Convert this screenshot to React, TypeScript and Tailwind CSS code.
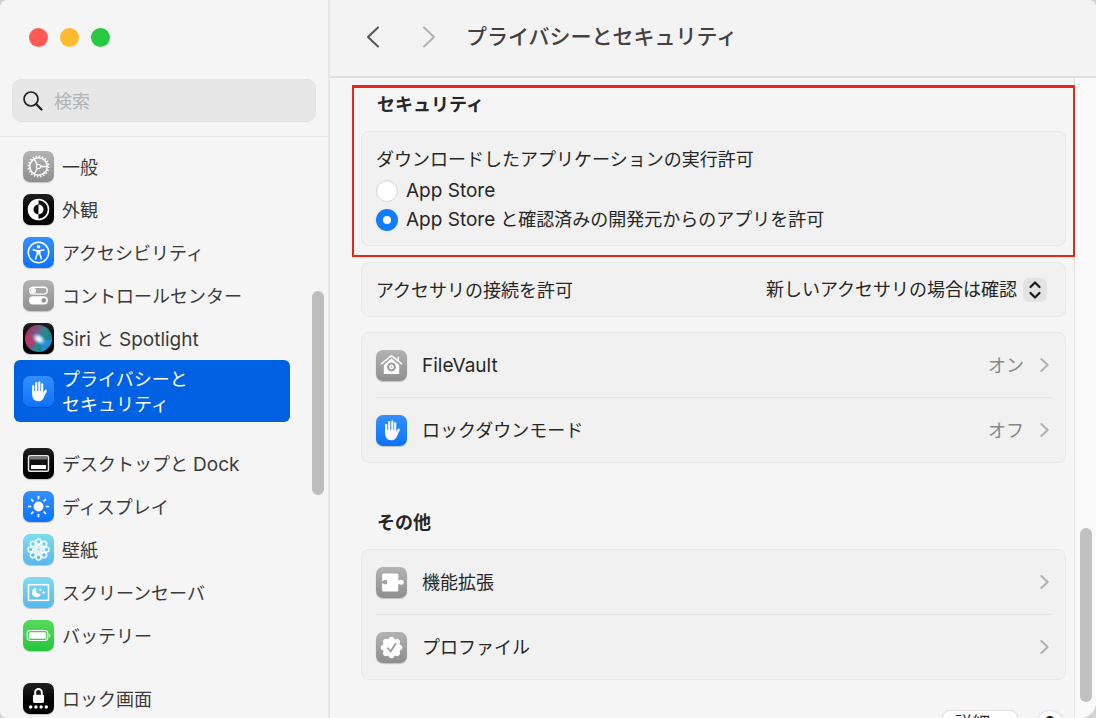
import { useState } from 'react'
import type { ReactNode } from 'react'
import clsx from 'clsx'

const OCTANTS = [0, 45, 90, 135, 180, 225, 270, 315]

function GearGlyph() {
  return (
    <g fill="none" stroke="#fff">
      <circle cx="15.5" cy="15.5" r="10.2" strokeWidth="1.6" strokeDasharray="1.5 1.704" />
      <circle cx="15.5" cy="15.5" r="8.7" strokeWidth="1.6" />
      <circle cx="15.5" cy="15.5" r="2.1" strokeWidth="1.2" />
      <path d="M17.7 15.5h6.4M14.4 13.6 11.2 8M14.4 17.4 11.2 23" strokeWidth="1.4" />
    </g>
  )
}

function AppearanceGlyph() {
  return (
    <g>
      <circle cx="15.5" cy="15.5" r="10" fill="none" stroke="#fff" strokeWidth="1.6" />
      <path d="M15.5 5.5a10 10 0 0 0 0 20v-5a5 5 0 0 1 0-10z" fill="#fff" />
      <path d="M15.5 10.5a5 5 0 0 1 0 10z" fill="#fff" />
    </g>
  )
}

function AccessibilityGlyph() {
  return (
    <g>
      <circle cx="15.5" cy="15.5" r="10.2" fill="none" stroke="#fff" strokeWidth="1.6" />
      <circle cx="15.5" cy="9.8" r="1.7" fill="#fff" />
      <path
        d="M10.2 12.8 14.2 13.7v3.2L12.6 22M20.8 12.8 16.8 13.7v3.2L18.4 22"
        fill="none"
        stroke="#fff"
        strokeWidth="1.5"
        strokeLinecap="round"
        strokeLinejoin="round"
      />
      <path d="M14 13h3v4.6h-3z" fill="#fff" />
    </g>
  )
}

function SwitchesGlyph() {
  return (
    <g>
      <rect x="6.8" y="7.3" width="17.4" height="6.8" rx="3.4" fill="none" stroke="#fff" strokeWidth="1.4" />
      <circle cx="10.4" cy="10.7" r="2.6" fill="#fff" />
      <rect x="6.1" y="16.3" width="18.8" height="8.2" rx="4.1" fill="#fff" />
      <circle cx="20.8" cy="20.4" r="2.4" fill="#959595" />
    </g>
  )
}

function SiriGlyph() {
  return (
    <g>
      <defs>
        <linearGradient id="siri-orb" x1="0" y1="0.2" x2="1" y2="0.8">
          <stop offset="0" stopColor="#b8285c" />
          <stop offset="0.4" stopColor="#63658f" />
          <stop offset="0.6" stopColor="#218d8b" />
          <stop offset="1" stopColor="#186db5" />
        </linearGradient>
        <radialGradient id="siri-glow">
          <stop offset="0" stopColor="#fff" />
          <stop offset="0.4" stopColor="#d7ecff" stopOpacity="0.85" />
          <stop offset="1" stopColor="#7fb9ff" stopOpacity="0" />
        </radialGradient>
      </defs>
      <circle cx="15.5" cy="15.5" r="13.6" fill="url(#siri-orb)" />
      <path d="M3 13C8 10 12 12 16 16c-4 3-8 9-7 11-4-3-7-8-6-14z" fill="#d52c5b" opacity="0.6" />
      <path d="M16 16c3 1 8 1 13 1-1 6-6 11-11 12 1-4 0-9-2-13z" fill="#2e9cff" opacity="0.5" />
      <ellipse cx="15.8" cy="16" rx="8" ry="5.5" fill="url(#siri-glow)" transform="rotate(35 15.8 16)" />
    </g>
  )
}

function HandGlyph() {
  return (
    <g fill="none" stroke="#fff" strokeLinecap="round">
      <path d="M10.2 10v7M13.2 7v9M16.3 6.5v9M19.2 8.3v8" strokeWidth="2.1" />
      <path d="M22.7 14.7 20.6 19" strokeWidth="2.3" />
      <path
        d="M9.2 15h11v2.5l1.8.9c-1 3.5-2.6 6.8-6.6 6.8-4 0-6.2-2.6-6.2-6.7z"
        fill="#fff"
        stroke="none"
      />
    </g>
  )
}

function DockGlyph() {
  return (
    <g>
      <rect x="5.5" y="7.7" width="20" height="15.6" rx="1.5" fill="#111" stroke="#e8e8e8" strokeWidth="1.5" />
      <path d="M6.5 9h18v2.5h-18z" fill="#777" />
      <rect x="8" y="17" width="15" height="4" rx="0.5" fill="#fff" />
    </g>
  )
}

function SunGlyph() {
  return (
    <g>
      <circle cx="15.5" cy="15.5" r="4.9" fill="#fff" />
      {OCTANTS.map((angle) => (
        <path
          key={angle}
          d="M15.5 5.6v1.9"
          stroke="#fff"
          strokeWidth="1.7"
          strokeLinecap="round"
          transform={`rotate(${angle} 15.5 15.5)`}
        />
      ))}
    </g>
  )
}

function FlowerGlyph() {
  return (
    <g fill="none" stroke="#fff">
      {OCTANTS.map((angle) => (
        <g key={angle} transform={`rotate(${angle} 15.5 15.5)`}>
          <circle cx="15.5" cy="7.7" r="2.6" strokeWidth="1.5" />
          <path d="M15.5 10.4v4" strokeWidth="1.4" />
        </g>
      ))}
      <circle cx="15.5" cy="15.5" r="3.8" strokeWidth="1.3" />
    </g>
  )
}

function ScreenSaverGlyph() {
  return (
    <g>
      <rect x="5.5" y="7.7" width="20" height="15.6" fill="none" stroke="#fff" strokeWidth="1.5" />
      <path d="M13.3 11a4.6 4.6 0 1 0 4.6 6.2 4.5 4.5 0 0 1-4.6-6.2z" fill="#fff" />
      <path
        d="M17.2 11.2l.5 1.2 1.2.5-1.2.5-.5 1.2-.5-1.2-1.2-.5 1.2-.5zM20.5 13.6l.6 1.4 1.4.6-1.4.6-.6 1.4-.6-1.4-1.4-.6 1.4-.6z"
        fill="#fff"
      />
    </g>
  )
}

function BatteryGlyph() {
  return (
    <g>
      <rect x="4.2" y="10.5" width="20.6" height="10" rx="3" fill="none" stroke="#fff" strokeWidth="1.2" />
      <rect x="5.9" y="12.2" width="17.2" height="6.6" rx="1.5" fill="#fff" />
      <path d="M26 13.8c1.8.6 1.8 2.8 0 3.4z" fill="#fff" />
    </g>
  )
}

function LockGlyph() {
  return (
    <g fill="#fff">
      <path d="M12.2 12.5V9.3a3.3 3.3 0 0 1 6.6 0v3.2" fill="none" stroke="#fff" strokeWidth="1.9" />
      <rect x="10" y="11.7" width="11" height="8.3" rx="1.4" />
      <circle cx="7.7" cy="24" r="1.7" />
      <circle cx="12.9" cy="24" r="1.7" />
      <circle cx="18.1" cy="24" r="1.7" />
      <circle cx="23.3" cy="24" r="1.7" />
    </g>
  )
}

function VaultGlyph() {
  return (
    <g>
      <path
        d="M5.3 13.8 15.5 5.7l10.2 8.1M22.3 7.3v3"
        fill="none"
        stroke="#fff"
        strokeWidth="1.5"
        strokeLinecap="round"
        strokeLinejoin="round"
      />
      <path d="M15.5 8.6 23.2 15V24H7.8v-9z" fill="#fff" />
      <circle cx="15.5" cy="17" r="3.4" fill="none" stroke="#999" strokeWidth="2" />
      <circle cx="15.5" cy="17" r="0.8" fill="#999" />
    </g>
  )
}

function PuzzleGlyph() {
  return (
    <path
      d="M7.6 6.5h13.2a1.5 1.5 0 0 1 1.5 1.5v5.6c1.1 0 1.5-.9 2.9-.9a2.5 2.5 0 0 1 0 5c-1.4 0-1.8-.9-2.9-.9V23a1.5 1.5 0 0 1-1.5 1.5H7.6A1.5 1.5 0 0 1 6.100 23v-7c.9 0 1.500 1.400 3 1.400a2.300 2.300 0 0 0 0-4.600c-1.500 0-2.100 1.400-3 1.400V8a1.500 1.500 0 0 1 1.500-1.500z"
      fill="#fff"
    />
  )
}

function SealGlyph() {
  return (
    <g>
      <g fill="#fff">
        <circle cx="15.5" cy="15.5" r="9" />
        {OCTANTS.map((angle) => (
          <circle key={angle} cx="15.5" cy="7.5" r="2.8" transform={`rotate(${angle} 15.5 15.5)`} />
        ))}
      </g>
      <path
        d="M11.8 16.2l2.800 3.300 5-7.800"
        fill="none"
        stroke="#999"
        strokeWidth="1.7"
        strokeLinecap="round"
        strokeLinejoin="round"
      />
    </g>
  )
}

const TILES = {
  gray: 'bg-linear-to-b from-[#b3b3b3] to-[#8e8e8e]',
  black: 'bg-linear-to-b from-[#202020] to-black',
  blue: 'bg-linear-to-b from-[#338fff] to-[#0a72f8]',
  sky: 'bg-linear-to-b from-[#7fdcf0] to-[#55b8ec]',
  green: 'bg-linear-to-b from-[#55dc5c] to-[#22c63c]',
}

type Tile = keyof typeof TILES

function IconTile({ tile, children }: { tile: Tile; children: ReactNode }) {
  return (
    <span className={clsx('block size-[31px] shrink-0 rounded-[7px] shadow-[0_1px_1px_rgba(0,0,0,0.2)]', TILES[tile])}>
      <svg viewBox="0 0 31 31" className="size-full" aria-hidden="true">
        {children}
      </svg>
    </span>
  )
}

// Latin text is set one pixel larger so it balances with the kana
function Latin({ children }: { children: ReactNode }) {
  return <span className="text-[19px]">{children}</span>
}

interface NavItem {
  label: ReactNode
  tile: Tile
  glyph: ReactNode
  active?: boolean
}

const NAV_GROUPS: NavItem[][] = [
  [
    { label: '一般', tile: 'gray', glyph: <GearGlyph /> },
    { label: '外観', tile: 'black', glyph: <AppearanceGlyph /> },
    { label: 'アクセシビリティ', tile: 'blue', glyph: <AccessibilityGlyph /> },
    { label: 'コントロールセンター', tile: 'gray', glyph: <SwitchesGlyph /> },
    { label: <><Latin>Siri</Latin> と <Latin>Spotlight</Latin></>, tile: 'black', glyph: <SiriGlyph /> },
    { label: <>プライバシーと<br />セキュリティ</>, tile: 'blue', glyph: <HandGlyph />, active: true },
  ],
  [
    { label: <>デスクトップと <Latin>Dock</Latin></>, tile: 'black', glyph: <DockGlyph /> },
    { label: 'ディスプレイ', tile: 'blue', glyph: <SunGlyph /> },
    { label: '壁紙', tile: 'sky', glyph: <FlowerGlyph /> },
    { label: 'スクリーンセーバ', tile: 'sky', glyph: <ScreenSaverGlyph /> },
    { label: 'バッテリー', tile: 'green', glyph: <BatteryGlyph /> },
  ],
  [{ label: 'ロック画面', tile: 'black', glyph: <LockGlyph /> }],
]

function Chevron({ className, flip = false }: { className: string; flip?: boolean }) {
  return (
    <svg
      viewBox="0 0 14 22"
      className={className}
      fill="none"
      stroke="currentColor"
      strokeWidth="2"
      strokeLinecap="round"
      strokeLinejoin="round"
      aria-hidden="true"
    >
      <path d={flip ? 'M12 1.5 2 11l10 9.5' : 'M2 1.5 12 11 2 20.5'} />
    </svg>
  )
}

function Sidebar() {
  return (
    <aside className="flex w-[330px] shrink-0 flex-col border-r-2 border-[#e6e6e6] bg-[#f5f5f5]">
      <div className="flex gap-3 px-[29px] pt-7">
        <button aria-label="閉じる" className="size-[19px] rounded-full bg-[#ff5b54]" />
        <button aria-label="しまう" className="size-[19px] rounded-full bg-[#fdbb2d]" />
        <button aria-label="拡大" className="size-[19px] rounded-full bg-[#28c840]" />
      </div>

      <label className="mx-3 mt-8 mb-3.5 flex h-[43px] items-center gap-[11px] rounded-[9px] border border-[#e3e3e3] bg-[#e7e7e7] px-2.5">
        <svg viewBox="0 0 20 20" className="size-5 shrink-0" fill="none" stroke="#1f1f1f" strokeLinecap="round" aria-hidden="true">
          <circle cx="8" cy="8" r="7" strokeWidth="1.7" />
          <path d="M13.3 13.3 18.500 18.500" strokeWidth="2.3" />
        </svg>
        <input
          type="text"
          aria-label="検索"
          placeholder="検索"
          className="min-w-0 flex-1 bg-transparent pt-0.5 outline-none placeholder:text-[#b2b2b2]"
        />
      </label>

      <div className="flex min-h-0 flex-1 overflow-hidden border-t border-[#e6e6e6]">
        <nav className="flex flex-1 flex-col gap-5 pt-2 pl-3.5">
          {NAV_GROUPS.map((group, i) => (
            <ul key={i}>
              {group.map((item, j) => (
                <li key={j}>
                  <a
                    href="#"
                    className={clsx(
                      'flex items-center gap-2 rounded-md px-[9px]',
                      item.active ? 'h-[62px] bg-[#0062e2] leading-[25px] text-white' : 'h-[43px] text-[#3a3a3a]',
                    )}
                  >
                    <IconTile tile={item.tile}>{item.glyph}</IconTile>
                    <span className="pt-0.5">{item.label}</span>
                  </a>
                </li>
              ))}
            </ul>
          ))}
        </nav>
        <div className="w-[38px] shrink-0 pt-[154px] pl-[22px]">
          <div className="h-[204px] w-3 rounded-full bg-[#bdbdbd]" />
        </div>
      </div>
    </aside>
  )
}

const CARD = 'rounded-lg border border-[#e8e8e8] bg-[#f1f1f1]'

interface LinkRow {
  label: ReactNode
  tile: Tile
  glyph: ReactNode
  value?: string
}

function LinkCard({ rows }: { rows: LinkRow[] }) {
  return (
    <ul className={clsx(CARD, 'divide-y divide-[#e4e4e4] px-3.5')}>
      {rows.map((row, i) => (
        <li key={i}>
          <a href="#" className="flex h-16 items-center">
            <IconTile tile={row.tile}>{row.glyph}</IconTile>
            <span className="ml-[15px] flex-1 pt-0.5">{row.label}</span>
            <span className="pt-0.5 text-[#868686]">{row.value}</span>
            <Chevron className="mr-0.5 ml-4 h-3.5 w-[9px] stroke-3 text-[#b0b0b0]" />
          </a>
        </li>
      ))}
    </ul>
  )
}

const RADIO =
  'size-[22px] appearance-none rounded-full border border-[#dadada] bg-white shadow-[inset_0_1px_1px_rgba(0,0,0,0.08)] checked:border-[7px] checked:border-[#117dfc] checked:shadow-none'

function DownloadPolicy() {
  const [source, setSource] = useState('identified')

  return (
    <section className="relative">
      <h2 className="px-4 font-bold">セキュリティ</h2>
      <fieldset className={clsx(CARD, 'mt-3.5 flex flex-col px-3.5 pt-3.5 pb-[11px]')}>
        <legend className="float-left h-[30px] leading-7">ダウンロードしたアプリケーションの実行許可</legend>
        <label className="flex h-[29px] items-center gap-2">
          <input type="radio" name="source" className={RADIO} checked={source === 'store'} onChange={() => setSource('store')} />
          <Latin>App Store</Latin>
        </label>
        <label className="flex h-[29px] items-center gap-2">
          <input type="radio" name="source" className={RADIO} checked={source === 'identified'} onChange={() => setSource('identified')} />
          <span>
            <Latin>App Store</Latin> と確認済みの開発元からのアプリを許可
          </span>
        </label>
      </fieldset>
      {/* Highlight frame drawn over the section */}
      <div className="pointer-events-none absolute -inset-x-[9px] -top-2 -bottom-[11px] border-2 border-t-3 border-[#e8251a]" />
    </section>
  )
}

function AccessoryRow() {
  return (
    <div className={clsx(CARD, 'flex h-[55px] items-center justify-between pr-[18px] pl-3.5')}>
      <label htmlFor="accessories" className="pt-0.5">
        アクセサリの接続を許可
      </label>
      <div className="relative">
        <select id="accessories" className="block h-6 appearance-none bg-transparent pr-[29px] outline-none">
          <option>新しいアクセサリの場合は確認</option>
        </select>
        <span className="pointer-events-none absolute top-0 right-0 flex size-6 items-center justify-center rounded-md bg-[#e3e3e3]">
          <svg
            viewBox="0 0 12 18"
            className="h-[18px] w-3"
            fill="none"
            stroke="#1c1c1c"
            strokeWidth="2.2"
            strokeLinecap="round"
            strokeLinejoin="round"
            aria-hidden="true"
          >
            <path d="M1.5 6 6 1.5 10.5 6M1.5 12 6 16.5 10.5 12" />
          </svg>
        </span>
      </div>
    </div>
  )
}

export default function App() {
  return (
    <div className="h-screen bg-[#d4d4d4]">
      <div
        lang="ja"
        className="flex h-full overflow-hidden rounded-lg rounded-br-2xl bg-[#f5f5f5] font-['Inter','Noto_Sans_CJK_JP',sans-serif] text-[18px] leading-6 text-[#262626]"
      >
        <Sidebar />

        <main className="flex min-w-0 flex-1 flex-col">
          <header className="flex h-[78px] shrink-0 items-center border-b-2 border-[#dfdfdf] bg-[#f3f3f3] pb-0.5 pl-9">
            <button aria-label="戻る" className="text-[#555555]">
              <Chevron flip className="h-[22px] w-3.5" />
            </button>
            <button aria-label="進む" className="ml-[42px] text-[#b2b2b2]">
              <Chevron className="h-[22px] w-3.5" />
            </button>
            <h1 className="ml-[30px] text-[21px] font-medium text-[#414141]">プライバシーとセキュリティ</h1>
          </header>

          <div className="flex min-h-0 flex-1 overflow-hidden">
            <div className="flex min-w-0 flex-1 flex-col border-r border-[#e2e2e2] pt-[15px] pr-2 pl-[31px]">
              <DownloadPolicy />
              <div className="mt-4 flex flex-col gap-[15px]">
                <AccessoryRow />
                <LinkCard
                  rows={[
                    { label: <Latin>FileVault</Latin>, tile: 'gray', glyph: <VaultGlyph />, value: 'オン' },
                    { label: 'ロックダウンモード', tile: 'blue', glyph: <HandGlyph />, value: 'オフ' },
                  ]}
                />
              </div>
              <h2 className="mt-12 mb-3.5 px-4 font-bold">その他</h2>
              <LinkCard
                rows={[
                  { label: '機能拡張', tile: 'gray', glyph: <PuzzleGlyph /> },
                  { label: 'プロファイル', tile: 'gray', glyph: <SealGlyph /> },
                ]}
              />
              <div className="mt-[30px] flex justify-end gap-[18px] pr-0.5">
                <button className="h-7 w-[76px] rounded-lg border border-[#e2e2e2] bg-white shadow-sm">詳細...</button>
                <button aria-label="ヘルプ" className="size-7 rounded-full border border-[#e2e2e2] bg-white font-semibold shadow-sm">
                  ?
                </button>
              </div>
            </div>
            <div className="flex w-[21px] shrink-0 flex-col items-center justify-end bg-[#fafafa] pb-4">
              <div className="h-[174px] w-3 rounded-full bg-[#c1c1c1]" />
            </div>
          </div>
        </main>
      </div>
    </div>
  )
}
